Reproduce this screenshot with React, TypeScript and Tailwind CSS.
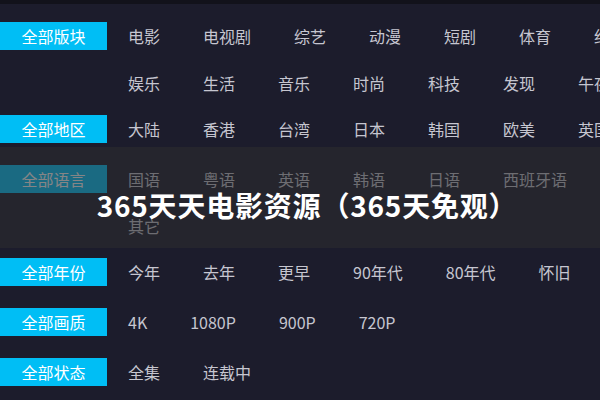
import React from 'react';

interface Category {
  label: string;
  lines: string[][];
}

const categories: Category[] = [
  {
    label: '全部版块',
    lines: [
      ['电影', '电视剧', '综艺', '动漫', '短剧', '体育', '纪录片'],
      ['娱乐', '生活', '音乐', '时尚', '科技', '发现', '午夜'],
    ],
  },
  { label: '全部地区', lines: [['大陆', '香港', '台湾', '日本', '韩国', '欧美', '英国']] },
  {
    label: '全部语言',
    lines: [
      ['国语', '粤语', '英语', '韩语', '日语', '西班牙语'],
      ['其它'],
    ],
  },
  { label: '全部年份', lines: [['今年', '去年', '更早', '90年代', '80年代', '怀旧']] },
  { label: '全部画质', lines: [['4K', '1080P', '900P', '720P']] },
  { label: '全部状态', lines: [['全集', '连载中']] },
];

const font = { fontFamily: '"Noto Sans CJK SC", "Liberation Sans", sans-serif' };

export default function App() {
  return (
    <div className="relative w-[600px] h-[400px] overflow-hidden bg-[#1c1c2c]" style={font}>
      <div className="h-[4px] bg-[#12121b]" />
      <div className="pt-[18px]">
        {categories.map((cat) => (
          <div key={cat.label} className="flex items-start">
            <div className="w-[107px] h-[28px] mb-[22px] shrink-0 bg-[#00bef5] text-white text-[16px] leading-[28px] text-center">
              {cat.label}
            </div>
            <div className="ml-[21px] flex flex-col">
              {cat.lines.map((line, i) => (
                <div key={i} className="flex gap-[43px] h-[28px] mb-[18.5px] whitespace-nowrap text-[16px] leading-[28px] text-[#c6c6d0]">
                  {line.map((item) => (
                    <span key={item}>{item}</span>
                  ))}
                </div>
              ))}
            </div>
          </div>
        ))}
      </div>

      <div className="absolute left-0 right-0 top-[147px] h-[101px] bg-[rgba(44,44,46,0.58)] flex items-center justify-center pt-[14px] pl-[14px]">
        <h1 className="text-white text-[28px] font-bold leading-none tracking-[0.8px]">
          365天天电影资源（365天免观）
        </h1>
      </div>
    </div>
  );
}
